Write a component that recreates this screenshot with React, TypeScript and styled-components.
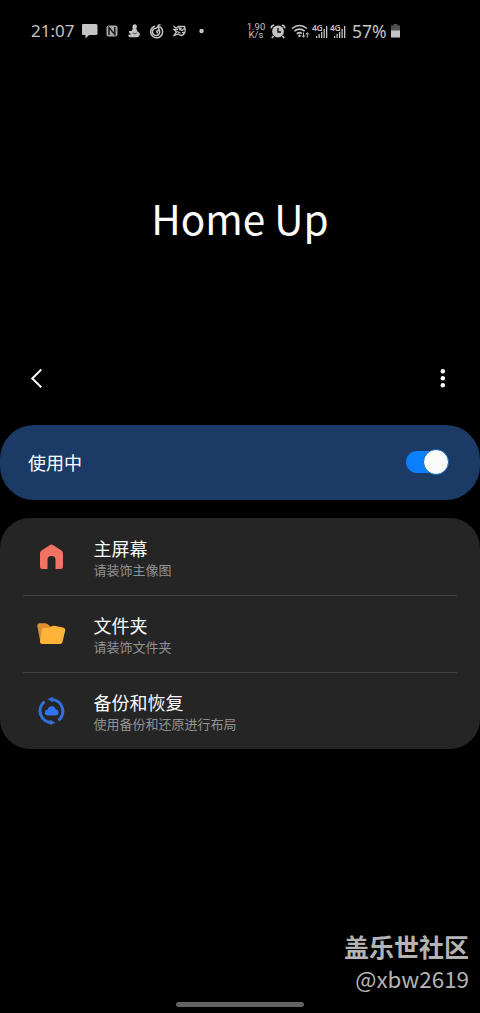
import React from 'react';
import styled, { createGlobalStyle } from 'styled-components';

const GlobalStyle = createGlobalStyle`
  * { box-sizing: border-box; }
  body {
    margin: 0;
    background: #000;
    color: #fff;
    font-family: "Noto Sans CJK SC", sans-serif;
  }
`;

const Screen = styled.main`
  width: 480px;
  height: 1013px;
  display: flex;
  flex-direction: column;
  overflow: hidden;
  background: #000;
`;

const StatusBar = styled.header`
  height: 62px;
  padding: 0 80px 0 31px;
  display: flex;
  align-items: center;
  justify-content: space-between;
  color: #c4c4c4;
`;

const StatusGroup = styled.div`
  display: flex;
  align-items: center;
`;

const StatusText = styled.span<{ $width: number }>`
  width: ${(p) => p.$width}px;
  font-family: "Noto Sans", sans-serif;
  font-size: 17px;
  line-height: 24px;
  white-space: nowrap;
`;

const BatteryLevel = styled(StatusText)`
  margin-left: 4px;
  font-size: 17.500px;
`;

const Speed = styled.span`
  width: 20px;
  display: flex;
  flex-direction: column;
  align-items: center;
  font-family: Roboto, sans-serif;
  font-size: 9.500px;
  line-height: 8.500px;
  white-space: nowrap;
`;

const StatusIcon = styled.svg<{ $gap: number }>`
  display: block;
  flex: none;
  margin-left: ${(p) => p.$gap}px;
`;

const Hero = styled.section`
  height: 292px;
  padding-top: 126px;
  text-align: center;
`;

const Title = styled.h1`
  margin: 0;
  font-size: 40.500px;
  font-weight: 400;
  line-height: 60px;
  color: #fcfcfc;
`;

const Toolbar = styled.nav`
  height: 71px;
  padding: 13px 34px 0 28px;
  display: flex;
  justify-content: space-between;
`;

const IconButton = styled.button`
  height: 22px;
  padding: 0;
  border: 0;
  background: none;
  color: #fff;
  svg { display: block; }
`;

const StatusCard = styled.section`
  height: 75px;
  padding: 0 31px 2px 28px;
  display: flex;
  align-items: center;
  justify-content: space-between;
  border-radius: 34px;
  background: #1b3b66;
`;

const StatusLabel = styled.span`
  font-size: 18px;
  line-height: 26px;
`;

const Switch = styled.button`
  width: 43px;
  height: 26px;
  padding: 0;
  display: flex;
  align-items: center;
  border: 0;
  background: none;
`;

const Track = styled.span`
  width: 42px;
  height: 22px;
  display: flex;
  align-items: center;
  justify-content: flex-end;
  border-radius: 11px;
  background: #0a80ff;
`;

const Thumb = styled.span`
  flex: none;
  width: 26px;
  height: 26px;
  margin-right: -1px;
  border: 1px solid #1267bd;
  border-radius: 50%;
  background: #fafafa;
`;

const Menu = styled.section`
  height: 231px;
  margin-top: 18px;
  padding: 0 23px;
  border-radius: 30px;
  background: #252525;
`;

const MenuRow = styled.div`
  height: 77px;
  padding: 0 0 0 14px;
  display: flex;
  align-items: center;
  border-top: 1px solid transparent;
  & + & { border-top-color: #404040; }
  > svg { flex: none; }
`;

const MenuText = styled.div`
  margin-left: 27.500px;
  display: flex;
  flex-direction: column;
`;

const MenuTitle = styled.span`
  height: 24px;
  font-size: 18px;
  line-height: 24px;
  color: #fafafa;
`;

const MenuHint = styled.span`
  height: 19px;
  font-size: 13px;
  line-height: 19px;
  color: #929292;
`;

const Footer = styled.footer`
  flex: 1;
  padding: 0 11px 6px;
  display: flex;
  flex-direction: column;
  justify-content: flex-end;
  align-items: flex-end;
  color: #b4b4b4;
`;

const Community = styled.strong`
  font-size: 25px;
  font-weight: 700;
  line-height: 34px;
`;

const Author = styled.span`
  height: 32px;
  font-size: 22.400px;
  line-height: 30px;
`;

const HomeHandle = styled.div`
  align-self: center;
  width: 128px;
  height: 5px;
  margin-top: 7px;
  border-radius: 3px;
  background: #626262;
`;

const ChatIcon = () => (
  <StatusIcon $gap={7} width="16" height="15" viewBox="0 0 16 15" fill="currentColor">
    <path d="M1 0H14Q15.500 0 15.500 1.500V9.500Q15.500 11 14 11H7L3.500 14.500V11H1Q0 11 0 10V1Q0 0 1 0Z" />
  </StatusIcon>
);

const NfcIcon = () => (
  <StatusIcon $gap={8} width="12" height="12" viewBox="0 0 12 12">
    <rect x="0.500" y="0.500" width="11" height="11" rx="2" fill="#a8a8a8" />
    <path d="M3 10V2.500L8.800 9.500V2" fill="none" stroke="#181818" strokeWidth="1.500" />
  </StatusIcon>
);

const FigureIcon = () => (
  <StatusIcon $gap={10} width="12" height="14" viewBox="0 0 12 14" fill="currentColor">
    <path d="M5 1Q7-.5 8.700 1.200Q9.300 3 8.200 4.500L9.500 7.500L11.500 9Q12.500 12 9.500 13.200H2Q0 12.500.3 10.800L3 10.500L1 8.500V7H3.500L4.800 4.800Q4 3 5 1Z" />
    <path d="M4.500 9L7 9.800L9 9" fill="none" stroke="#222" strokeWidth=".7" />
  </StatusIcon>
);

const MusicIcon = () => (
  <StatusIcon $gap={10} width="14" height="15" viewBox="0 0 14 15" fill="none" stroke="currentColor" strokeWidth="1.500" strokeLinecap="round">
    <path d="M4.500 2.200A6 6 0 1 0 10.500 3.200Q8 2.700 5.800 4.300A3.600 3.600 0 1 0 9.600 7.200Q8.500 5.800 7.200 6.800Q6.300 8 7.400 8.700M9.600 7.200L8 2.200Q8 .8 10 1" />
  </StatusIcon>
);

const MaskIcon = () => (
  <StatusIcon $gap={9} width="13" height="12" viewBox="0 0 13 12" fill="none" stroke="currentColor" strokeWidth="1.300">
    <path d="M.5 1L3 3L5.500 1.500H11.500Q12.500 4 12 7Q11 10 8 10.500L5.500 9L1 10.500L3.500 7L1 4.500H5M6 3.500L9 5.500L11.500 3.500M4 6.500L7.500 8M9 7.500H11" />
    <path d="M5 2L9 3L7 6Z" fill="currentColor" stroke="none" />
  </StatusIcon>
);

const DotIcon = () => (
  <StatusIcon $gap={13} width="5" height="5" viewBox="0 0 5 5" fill="currentColor">
    <circle cx="2.500" cy="2" r="2.200" />
  </StatusIcon>
);

const AlarmIcon = () => (
  <StatusIcon $gap={4} width="16" height="15" viewBox="0 0 16 15">
    <circle cx="8" cy="7.500" r="5.900" fill="currentColor" />
    <path d="M1.200 4.200Q1.300 1.500 4.200 1M11.800 1Q14.700 1.500 14.800 4.200M3.500 12L1.800 14M12.500 12L14.200 14" fill="none" stroke="currentColor" strokeWidth="1.700" />
    <path d="M8 4V8H11" fill="none" stroke="#000" strokeWidth="1.300" />
  </StatusIcon>
);

const WifiIcon = () => (
  <StatusIcon $gap={5} width="19" height="15" viewBox="0 0 19 15" fill="none" stroke="currentColor" strokeWidth="1.600">
    <path d="M1 4.500Q8.500-1.500 16 4.500M3.300 7.200Q8.500 3 13.700 7.200M5.800 9.800Q8.500 7.500 11 9.500" />
    <circle cx="8.500" cy="11.800" r="1.300" fill="currentColor" stroke="none" />
    <path d="M12.500 8.500V13M11 11.500L12.500 13.300L14 11.500M16.300 13.500V9M14.800 10.500L16.300 8.700L17.800 10.500" strokeWidth="1" />
  </StatusIcon>
);

const Signal = styled.div<{ $gap: number }>`
  width: 18px;
  height: 15px;
  margin-left: ${(p) => p.$gap}px;
  display: flex;
  align-items: flex-start;
`;

const Network = styled.span`
  width: 4px;
  font-family: "Noto Sans", sans-serif;
  font-size: 8.500px;
  font-weight: 600;
  line-height: 7px;
  letter-spacing: -0.300px;
`;

const CellSignal = ({ gap }: { gap: number }) => (
  <Signal $gap={gap}>
    <Network>4G</Network>
    <svg width="14" height="15" viewBox="0 0 14 15" fill="currentColor">
      <path d="M0 12H1.300V14H0ZM2.500 10H3.800V14H2.500ZM5 8H6.300V14H5ZM7.500 5H8.800V14H7.500ZM10 2H11.300V14H10Z" />
    </svg>
  </Signal>
);

const BatteryIcon = () => (
  <StatusIcon $gap={1} width="9" height="14" viewBox="0 0 9 14">
    <path d="M2.500 0H6.500V1.500H9V7H0V1.500H2.500Z" fill="#505050" />
    <path d="M0 6.500H9V13.500H0Z" fill="#c4c4c4" />
  </StatusIcon>
);

const HomeIcon = () => (
  <svg width="29" height="30" viewBox="0 0 29 30">
    <path d="M13 3Q14.500 2 16 3L24.500 8.500Q26 9.500 26 11.200V24.500Q26 27 23.500 27H18.500V17.500Q18.500 14 14.500 14Q10.500 14 10.500 17.500V27H5.500Q3 27 3 24.500V11.200Q3 9.500 4.500 8.500Z" fill="#f47264" />
  </svg>
);

const FolderIcon = () => (
  <svg width="29" height="30" viewBox="0 0 29 30">
    <path d="M2 4.200H8Q10 4 11.500 5.800L14 8V24H5Q3.500 24 3.200 22L.3 7Q0 4.600 2 4.200Z" fill="#df8d31" />
    <path d="M7 8.800H11Q13 8.800 14.500 7.300Q15.500 6.500 17.500 6.700L26 8.400Q28.500 9 28.200 11.500L25.500 23Q25 25 23 25H5.500Q3 25 3 22.500L5 10.500Q5.400 8.800 7 8.800Z" fill="#ffb338" />
  </svg>
);

const BackupIcon = () => (
  <svg width="29" height="30" viewBox="0 0 29 30">
    <g fill="none" stroke="#346edb" strokeWidth="3.100">
      <path d="M7.500 5.600A11.700 11.700 0 0 0 14.500 26.500" />
      <path d="M14.500 3.500A11.700 11.700 0 0 1 21.500 24.300" />
    </g>
    <path d="M15.800 .8V6.200L10.500 3.200ZM13.200 29V23.800L18.500 26.800Z" fill="#346edb" />
    <path d="M10.500 19.500Q7.500 19 7.800 16Q8.200 13.700 10.700 13.500Q11.800 10 15 10.300Q18 10.500 18.600 13.300Q21.800 13.700 21.500 17Q21 19.500 18.500 19.500Z" fill="#3374ed" />
  </svg>
);

const items = [
  { title: '主屏幕', hint: '请装饰主像图', Icon: HomeIcon },
  { title: '文件夹', hint: '请装饰文件夹', Icon: FolderIcon },
  { title: '备份和恢复', hint: '使用备份和还原进行布局', Icon: BackupIcon },
];

export default function App() {
  return (
    <Screen>
      <GlobalStyle />
      <StatusBar>
        <StatusGroup>
          <StatusText $width={44}>21:07</StatusText>
          <ChatIcon /><NfcIcon /><FigureIcon /><MusicIcon /><MaskIcon /><DotIcon />
        </StatusGroup>
        <StatusGroup>
          <Speed><span>1.90</span><span>K/s</span></Speed>
          <AlarmIcon /><WifiIcon />
          <CellSignal gap={2} /><CellSignal gap={0} />
          <BatteryLevel $width={38}>57%</BatteryLevel>
          <BatteryIcon />
        </StatusGroup>
      </StatusBar>
      <Hero><Title>Home Up</Title></Hero>
      <Toolbar>
        <IconButton aria-label="返回">
          <svg width="16" height="22" viewBox="0 0 16 22" fill="none" stroke="currentColor" strokeWidth="1.900">
            <path d="M13.300 2.500L4.200 11.500L13.300 20.300" />
          </svg>
        </IconButton>
        <IconButton aria-label="更多">
          <svg width="6" height="22" viewBox="0 0 6 22" fill="currentColor">
            <circle cx="2.800" cy="4.200" r="2.200" /><circle cx="2.800" cy="11.200" r="2.200" /><circle cx="2.800" cy="18.200" r="2.200" />
          </svg>
        </IconButton>
      </Toolbar>
      <StatusCard>
        <StatusLabel>使用中</StatusLabel>
        <Switch role="switch" aria-checked="true" aria-label="使用中"><Track><Thumb /></Track></Switch>
      </StatusCard>
      <Menu>
        {items.map(({ title, hint, Icon }) => (
          <MenuRow key={title}>
            <Icon />
            <MenuText><MenuTitle>{title}</MenuTitle><MenuHint>{hint}</MenuHint></MenuText>
          </MenuRow>
        ))}
      </Menu>
      <Footer>
        <Community>盖乐世社区</Community>
        <Author>@xbw2619</Author>
        <HomeHandle />
      </Footer>
    </Screen>
  );
}
